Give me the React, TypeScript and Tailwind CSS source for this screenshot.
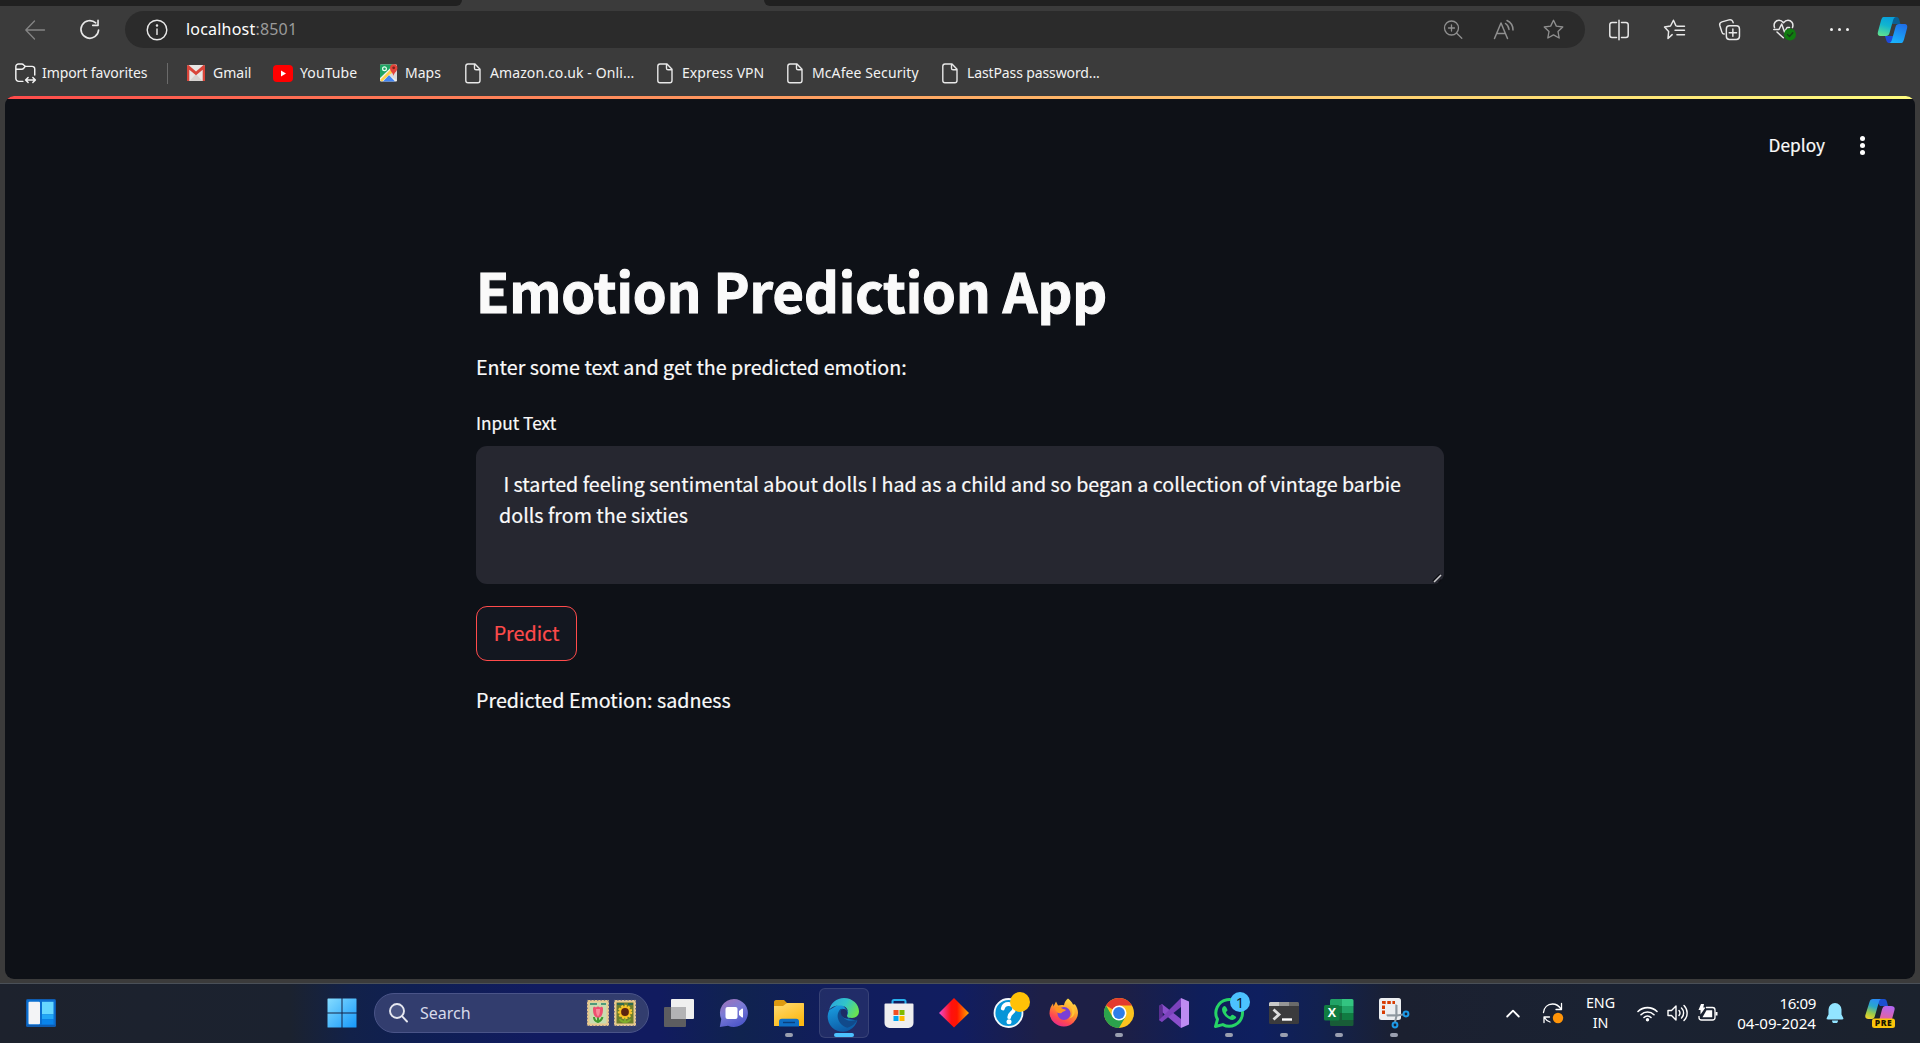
import type { ReactNode } from 'react';

function Icon({ size = 20, className = '', width = 1.3, children }: { size?: number; className?: string; width?: number; children: ReactNode }) {
  return (
    <svg width={size} height={size} viewBox="0 0 20 20" fill="none" stroke="currentColor" strokeWidth={width} strokeLinecap="round" strokeLinejoin="round" className={'shrink-0 overflow-visible ' + className}>
      {children}
    </svg>
  );
}

function AppIcon({ children, className = '' }: { children: ReactNode; className?: string }) {
  return (
    <svg width="30" height="30" viewBox="0 0 30 30" className={'block shrink-0 overflow-visible ' + className}>
      {children}
    </svg>
  );
}

const STAR = 'M10 1.2l2.7 5.6 6.1.8-4.5 4.3 1.1 6.2L10 15.1l-5.4 3 1.1-6.2L1.2 7.600l6.100-.8z';

function TabStrip() {
  return (
    <div className="flex h-[6px] w-full bg-[#3b3b3b]">
      <div className="h-full w-[462px] rounded-br-[6px] bg-[#202020]" />
      <div className="h-full w-[302px]" />
      <div className="h-full flex-1 rounded-bl-[6px] bg-[#202020]" />
    </div>
  );
}

function CopilotLogo() {
  return (
    <svg width="31" height="28" viewBox="0 0 31 28" className="shrink-0">
      <defs>
        <linearGradient id="cpA" x1="0.6" y1="0" x2="0.3" y2="1">
          <stop offset="0" stopColor="#089fdc" />
          <stop offset="0.45" stopColor="#11b5cf" />
          <stop offset="1" stopColor="#5fe08e" />
        </linearGradient>
        <linearGradient id="cpB" x1="0.7" y1="0" x2="0.3" y2="1">
          <stop offset="0" stopColor="#1f6fe8" />
          <stop offset="1" stopColor="#19b4fb" />
        </linearGradient>
      </defs>
      <path d="M8.500 1h11c2 0 2.400 1.500 3 3.500L23.500 8h-8z" fill="#0a5f92" />
      <path d="M22.500 27h-10c-2.600 0-3-2-3.600-4l-1-3h8z" fill="#1f49d8" />
      <path d="M6.500 1H19c-1.600 0-2.400 1.300-3 3.500l-3.500 12.500c-.7 2.300-1.700 3-3.500 3H3.500c-2.500 0-3.200-1.800-2.600-4L4 4.500C4.800 2 5.500 1 6.500 1z" fill="url(#cpA)" />
      <path d="M24.500 27H12c1.600 0 2.400-1.300 3-3.500l3.500-12.500c.7-2.300 1.700-3 3.500-3H27.500c2.500 0 3.200 1.800 2.600 4L27 23.500c-.8 2.500-1.500 3.500-2.500 3.500z" fill="url(#cpB)" />
    </svg>
  );
}

function Toolbar() {
  return (
    <div className="flex h-[47px] items-center text-[#e8e8e8]">
      <Icon className="ml-[25px] text-[#858585]" size={20}>
        <path d="M19.500 10H1M9.500 1L.8 10l8.700 9" />
      </Icon>
      <Icon className="ml-[34px]" size={22} width={1.5}>
        <path d="M17.800 10a8 8 0 1 1-2.600-6.400M17.300 1.300v4.500h-4.800" />
      </Icon>
      <div className="ml-[24px] flex h-[37px] w-[1460px] items-center rounded-full bg-[#2b2b2b]">
        <Icon className="ml-[21px]" size={22} width={1.3}>
          <circle cx="10" cy="10" r="8.900" />
          <path d="M10 9v5" />
          <circle cx="10" cy="6" r=".5" fill="currentColor" />
        </Icon>
        <p className="ml-[18px] pb-px text-[16px] leading-[22px] tracking-[0.200px] text-white">
          localhost<span className="text-[#9a9a9a]">:8501</span>
        </p>
        <div className="mr-[21px] ml-auto flex items-center text-[#8f8f8f]">
          <Icon size={20}>
            <circle cx="8.500" cy="8" r="7" />
            <path d="M13.500 13l5.300 5.200M5.500 8h6M8.500 5v6" />
          </Icon>
          <Icon className="ml-[31px]" size={20} width={1.5}>
            <path d="M.5 18.500L7 3l6.500 15.500M2.800 13.500h8.500M11.500 3.500a8 8 0 0 1 3.500 6M13 .5a10.500 10.500 0 0 1 6 9.500" />
          </Icon>
          <Icon className="ml-[29px]" size={21}>
            <path d={STAR} />
          </Icon>
        </div>
      </div>
      <Icon className="ml-[24px]" size={20} width={1.5}>
        <path d="M7.500 2.500H3A2.200 2.200 0 0 0 .8 4.700v10.600A2.200 2.200 0 0 0 3 17.500h4.500M12.500 2.500H17a2.200 2.200 0 0 1 2.200 2.200v10.600A2.200 2.200 0 0 1 17 17.500h-4.500M10 .3v19.400" />
      </Icon>
      <Icon className="ml-[35px]" size={21} width={1.4}>
        <path d="M7.800 14.900L3.800 18.600l.6-6.700L.5 7.700l5.700-1L9 1.200l2.300 5.100M12.300 6.800h7.200M10.500 10.800h9M12.300 14.900h7.200" />
      </Icon>
      <Icon className="ml-[34px]" size={21} width={1.4}>
        <path d="M7 12.500V9.500A3 3 0 0 1 10 6.500h6.500a3 3 0 0 1 3 3v7a3 3 0 0 1-3 3H10a3 3 0 0 1-3-3zM13.200 9.500v7M9.700 13h7M5 14.300C3.700 14.600 3 13.500 2.600 12L.8 6.200C.3 4.400 1 3.200 2.800 2.700L9.500.8C11.500.2 12.900 1 13.500 3.500" />
      </Icon>
      <svg className="ml-[33px] shrink-0" width="23" height="22" viewBox="0 0 23 22" fill="none" stroke="#e8e8e8" strokeWidth="1.500" strokeLinecap="round" strokeLinejoin="round">
        <path d="M1.500 8.500C0 4 3 1.300 6 1.300c2.300 0 3.600 1.300 4.500 2.400C11.400 2.600 12.700 1.300 15 1.300c3 0 6 2.700 4.500 7.200M0.800 10.500h5.200l2.700-5.500 2.800 8 2.500-4.500h2.500M4 13l6.300 5.800" />
        <circle cx="17" cy="15.500" r="6" fill="#107c10" stroke="none" />
        <path d="M14.500 15.500l2 2 3.300-3.800" stroke="#173d17" strokeWidth="1.300" />
      </svg>
      <div className="ml-[34px] flex gap-[5px]">
        <span className="size-[3px] rounded-full bg-[#f0f0f0]" />
        <span className="size-[3px] rounded-full bg-[#f0f0f0]" />
        <span className="size-[3px] rounded-full bg-[#f0f0f0]" />
      </div>
      <div className="ml-[28px]">
        <CopilotLogo />
      </div>
    </div>
  );
}

function FileIcon() {
  return (
    <svg width="16" height="21" viewBox="0 0 16 21" fill="none" stroke="#e8e8e8" strokeWidth="1.400" strokeLinejoin="round" className="shrink-0">
      <path d="M3 1h7l5 5.300v11.200a2.200 2.200 0 0 1-2.200 2.200H3A2.200 2.200 0 0 1 .8 17.500V3.200A2.200 2.200 0 0 1 3 1zM9.500 1v4.200c0 1 .6 1.600 1.600 1.600H15" />
    </svg>
  );
}

function Bookmark({ icon, label, box, gap = 'gap-[9px]' }: { icon: ReactNode; label: string; box: string; gap?: string }) {
  return (
    <div className={'flex shrink-0 items-center text-[14px] leading-5 whitespace-nowrap text-[#f2f2f2] ' + box + ' ' + gap}>
      {icon}
      <span>{label}</span>
    </div>
  );
}

function BookmarksBar() {
  return (
    <div className="flex h-[43px] items-center pb-[3px] pl-[15px]">
      <Bookmark
        box="w-[152px] tracking-[-0.080px]"
        gap="gap-[6px]"
        label="Import favorites"
        icon={
          <Icon size={21} width={1.4}>
            <path d="M7.500 17.500H3.500A2.700 2.700 0 0 1 .8 14.800V3.500A2.500 2.500 0 0 1 3.300 1h3.200c.8 0 1.300.3 1.800.9L9.800 3.200h6.500A2.500 2.500 0 0 1 18.800 5.700V11.500M.8 5.900h5.500c1 0 1.500-.3 2-.9l1.500-1.800M10.500 16.200h8.500M12.500 13.800l-2.400 2.400 2.400 2.400M17 13.800l2.400 2.400-2.400 2.400" />
          </Icon>
        }
      />
      <div className="h-[21px] w-px bg-[#6a6a6a]" />
      <Bookmark
        box="ml-[19px] w-[86px]"
        label="Gmail"
        gap="gap-[8px]"
        icon={
          <svg width="18" height="16" viewBox="0 0 18 16">
            <rect width="18" height="16" rx="1.500" fill="#e9e6e4" />
            <path d="M2.500 16L9 9l6.500 7z" fill="#d6d2d0" />
            <path d="M0 1.500C0 .5.700 0 1.500 0L9 6.500 16.500 0c.8 0 1.500.5 1.500 1.500V16h-2.300V4.800L9 10.200 2.300 4.800V16H0z" fill="#d9453a" />
          </svg>
        }
      />
      <Bookmark
        box="w-[107px] tracking-[0.100px]"
        gap="gap-[7px]"
        label="YouTube"
        icon={
          <svg width="20" height="17" viewBox="0 0 20 17">
            <rect width="20" height="17" rx="4" fill="#f00" />
            <path d="M8 5.500l5 3-5 3z" fill="#fff" />
          </svg>
        }
      />
      <Bookmark
        box="w-[85px]"
        gap="gap-[7px]"
        label="Maps"
        icon={
          <svg width="18" height="20" viewBox="0 0 18 20">
            <rect y="1.500" width="17" height="17" rx="1" fill="#f2f2f0" />
            <path d="M1 1.500h13L0 15V2.500a1 1 0 0 1 1-1z" fill="#1fa463" />
            <path d="M3 18.500L9 12l6 6.500z" fill="#4285f4" />
            <path d="M16 9l-7 3L2 18.500 0 17 12 5z" fill="#ffd04b" />
            <path d="M9 12l8-5v10.500z" fill="#dcdcdc" />
            <circle cx="4.500" cy="5.800" r="1.900" fill="none" stroke="#e9fff2" strokeWidth="1.200" />
            <path d="M13.500 13c-.6-3.500-3.500-4.500-3.500-8a3.700 3.700 0 0 1 7.400 0c0 3.500-3.300 4.500-3.900 8z" fill="#e5443a" />
            <circle cx="13.700" cy="4.800" r="1.400" fill="#7b231d" />
          </svg>
        }
      />
      <Bookmark box="w-[192px] tracking-[0.100px]" label="Amazon.co.uk - Onli..." icon={<FileIcon />} />
      <Bookmark box="w-[130px] tracking-[0.050px]" label="Express VPN" icon={<FileIcon />} />
      <Bookmark box="w-[155px] tracking-[0.100px]" label="McAfee Security" icon={<FileIcon />} />
      <Bookmark box="w-[190px] tracking-[-0.120px]" label="LastPass password..." icon={<FileIcon />} />
    </div>
  );
}

function Streamlit() {
  return (
    <main className="ml-[5px] flex h-[883px] w-[1910px] flex-col overflow-hidden rounded-[9px] bg-[#0e1117] font-['Noto_Sans_CJK_SC',sans-serif] text-[#fafafa] [-webkit-text-stroke:0.2px]">
      <div className="h-[3px] w-full bg-linear-to-r from-[#ff4b4b] to-[#fffd80]" />
      <header className="flex h-[92px] items-center justify-end pr-[50px]">
        <span className="text-[17.250px] leading-6">Deploy</span>
        <div className="ml-[35px] flex flex-col items-center gap-[2px]">
          <span className="size-[5px] rounded-full bg-white" />
          <span className="size-[5px] rounded-full bg-white" />
          <span className="size-[5px] rounded-full bg-white" />
        </div>
      </header>
      <section className="ml-[471px] flex w-[968px] flex-col items-start">
        <h1 className="mt-[63px] text-[54.100px] leading-[72px] font-bold tracking-[-0.030px] whitespace-nowrap [-webkit-text-stroke:1.1px]">Emotion Prediction App</h1>
        <p className="mt-[23px] text-[19.700px] leading-[36px]">Enter some text and get the predicted emotion:</p>
        <label className="mt-[25px] text-[17.250px] leading-[26px]">Input Text</label>
        <div className="relative mt-[10px] h-[138px] w-full rounded-[11px] bg-[#262730] pt-[22px] pl-[23px]">
          <p className="text-[19.700px] leading-[31px] whitespace-pre">{' I started feeling sentimental about dolls I had as a child and so began a collection of vintage barbie\ndolls from the sixties'}</p>
          <svg className="absolute right-[2px] bottom-[1px]" width="10" height="10" viewBox="0 0 10 10">
            <path d="M1 8.500L8 1.500" stroke="#0c0d12" strokeWidth="2" />
            <path d="M2 9L9 2" stroke="#c9c9cc" strokeWidth="1.600" />
            <path d="M6.500 9.500L9.500 6.500" stroke="#0c0d12" strokeWidth="1.500" />
          </svg>
        </div>
        <button className="mt-[22px] h-[55px] w-[101px] rounded-[11px] border border-[#ff4b4b] bg-[#131720] pb-[2px] text-[19.700px] leading-[31px] text-[#ff4b4b]">Predict</button>
        <p className="mt-[21px] text-[19.700px] leading-[36px]">Predicted Emotion: sadness</p>
      </section>
    </main>
  );
}

function Slot({ children, dot = false }: { children: ReactNode; dot?: boolean }) {
  return (
    <div className="relative flex h-full w-[55px] shrink-0 items-center justify-center">
      {children}
      {dot && <span className="absolute bottom-[5px] h-1 w-2 rounded-full bg-[#9a9fb0]" />}
    </div>
  );
}

function Stamp({ flower }: { flower: 'tulip' | 'sunflower' }) {
  const tulip = flower === 'tulip';
  return (
    <svg width="24" height="28" viewBox="0 0 24 28">
      <rect x="1" y="1" width="22" height="26" fill="#e8c98e" />
      <rect x=".8" y=".8" width="22.400" height="26.400" fill="none" stroke="#3b4576" strokeWidth="1.600" strokeDasharray="1.400 2" />
      <rect x="3.500" y="3.500" width="17" height="21" fill={tulip ? '#c9dcb0' : '#6d7f2c'} />
      <path d="M4 5h7M15 5h5" stroke={tulip ? '#4f9a7a' : '#2f6a52'} strokeWidth="2" />
      {tulip ? (
        <>
          <path d="M12 24V15M12 23c-3-1-4-3-4-5M12 23c3-1 4-3 4.500-5" stroke="#3f9a2f" strokeWidth="2" fill="none" />
          <path d="M7 9.500c0-2 2-2 3-1 1-1.500 3-1.500 4 0 1-1 3-1 3 1 0 6-1.500 9-5 9s-5-3-5-9z" fill="#ef4f70" />
          <path d="M10 10c0 4 .5 6 2 7.500 1.500-1.500 2-3.500 2-7.500z" fill="#f98a9a" />
        </>
      ) : (
        <>
          <path d="M12 24v-6M12 23c-3 0-5-2-5-3M12 23c3 0 5-2 5-3" stroke="#7fae2c" strokeWidth="2" fill="none" />
          <circle cx="12" cy="13" r="6" fill="#f5b915" stroke="#f8c832" strokeWidth="2.500" strokeDasharray="2 1.400" />
          <circle cx="12" cy="13" r="3.900" fill="#5b2410" />
        </>
      )}
    </svg>
  );
}

function Taskbar() {
  return (
    <footer className="flex h-[60px] w-full items-center overflow-hidden border-t border-[#4a5058] bg-[linear-gradient(90deg,#1d222d_0px,#1b222f_290px,#122149_350px,#0f1f52_410px,#111b60_540px,#111b5f_660px,#10234f_740px,#111d5c_830px,#111d60_960px,#1d1f47_1040px,#1d1f45_1120px,#0f1e5a_1200px,#0e1f5f_1260px,#12214f_1320px,#1b2030_1400px,#1a2232_1600px,#1b222d_1920px)] pb-px text-white">
      <svg width="30" height="28" viewBox="0 0 30 28" className="ml-[26px] shrink-0">
        <rect width="30" height="28" rx="1.500" fill="#0f5cb0" />
        <rect x="1" y="1" width="28" height="25" rx="1" fill="#0a6fd0" />
        <rect x="2.500" y="2.800" width="11.500" height="22.500" rx="1" fill="#f3f4f6" />
        <rect x="16" y="2.800" width="11.500" height="12.500" fill="#66d8ff" />
        <rect x="16" y="15.300" width="11.500" height="5" fill="#22a7f6" />
        <rect x="16" y="20.300" width="11.500" height="5" fill="#0a84ea" />
      </svg>
      <AppIcon className="ml-[271px]">
        <defs>
          <linearGradient id="win" x1="0" y1="0" x2="1" y2="1">
            <stop offset="0" stopColor="#85dcff" />
            <stop offset="1" stopColor="#1598fb" />
          </linearGradient>
        </defs>
        <path d="M1 .5h13.500V14.500H.5V1zM15.500.5H29a.5.5 0 0 1 .5.5v13.500h-14zM.5 15.500h14v14H1a.5.5 0 0 1-.5-.5zM15.500 15.500h14V29a.5.5 0 0 1-.5.5H15.500z" fill="url(#win)" />
      </AppIcon>
      <div className="ml-[17px] flex h-10 w-[275px] shrink-0 items-center rounded-full border border-[#4a5488] bg-[#323d6e]">
        <svg width="20" height="20" viewBox="0 0 20 20" className="ml-[14px]" fill="none" stroke="#e6e8f0" strokeWidth="1.900" strokeLinecap="round">
          <circle cx="8" cy="8" r="7" fill="#4a5584" />
          <path d="M13 13.200l5 5.300" />
        </svg>
        <span className="ml-[11px] text-[16px] text-[#d7daea]">Search</span>
        <div className="mr-[11px] ml-auto flex gap-[3px]">
          <Stamp flower="tulip" />
          <Stamp flower="sunflower" />
        </div>
      </div>
      <div className="ml-[2px] flex h-full shrink-0">
        <Slot>
          <AppIcon>
            <rect x="0" y="9" width="22" height="20" rx="1" fill="#5d5d60" />
            <rect x="7" y="1" width="23" height="20" rx="1" fill="#efefef" />
            <rect x="7" y="9" width="15" height="12" fill="#b3b3b5" />
          </AppIcon>
        </Slot>
        <Slot>
          <AppIcon>
            <defs>
              <linearGradient id="chat" x1="0" y1="0" x2="0.500" y2="1">
                <stop offset="0" stopColor="#a472b5" />
                <stop offset="0.500" stopColor="#7b7bd6" />
                <stop offset="1" stopColor="#5059c9" />
              </linearGradient>
            </defs>
            <path d="M15 1a14 14 0 1 1-6 26.700L.8 29l1.500-8A14 14 0 0 1 15 1z" fill="url(#chat)" />
            <rect x="6.500" y="9" width="12" height="12" rx="2" fill="#fff" />
            <path d="M20 13l3-2.500c.5-.3 1 0 1 .5v8c0 .5-.5.800-1 .5L20 17z" fill="#fff" />
          </AppIcon>
        </Slot>
        <Slot dot>
          <AppIcon>
            <defs>
              <linearGradient id="folder" x1="0" y1="0" x2="0.600" y2="1">
                <stop offset="0" stopColor="#ffdb73" />
                <stop offset="1" stopColor="#fdb913" />
              </linearGradient>
            </defs>
            <path d="M0 4c0-1 .6-2 2-2h8l3.500 3.500L10 9H0z" fill="#dd9a10" />
            <path d="M13 5h16.500l.5.500V28H0V8h9z" fill="url(#folder)" />
            <path d="M5 28.500v-5a2.800 2.800 0 0 1 2.800-2.800h14.400A2.800 2.800 0 0 1 25 23.500v5z" fill="#0f6fc6" />
            <path d="M9 24.500h12" stroke="#0a3f7c" strokeWidth="1.400" />
          </AppIcon>
        </Slot>
        <div className="relative flex h-full w-[55px] shrink-0 items-center justify-center">
          <div className="flex size-[50px] items-center justify-center rounded-md border border-white/10 bg-white/7">
            <AppIcon>
              <defs>
                <linearGradient id="edgeTop" x1="0" y1="0.200" x2="1" y2="0.600">
                  <stop offset="0" stopColor="#2aa5de" />
                  <stop offset="0.500" stopColor="#32c5c9" />
                  <stop offset="1" stopColor="#6be34f" />
                </linearGradient>
                <linearGradient id="edgeLow" x1="0.300" y1="0" x2="0.600" y2="1">
                  <stop offset="0" stopColor="#1aa0e2" />
                  <stop offset="1" stopColor="#0c59a4" />
                </linearGradient>
              </defs>
              <path d="M28.200 22.500A15 15 0 1 1 .3 12L12 5l10 12-2 4z" fill="url(#edgeLow)" />
              <path d="M.3 12C1.500 5 7.500 0 15 0c8.500 0 15 6.500 15 13.200 0 4.300-3.200 6.800-7 6.800-2.800 0-5-1-5-2 0-.8 1-1.500 1-3.700C19 10 15.500 7.500 11 7.500 5.500 7.500 1.800 9.500.3 12z" fill="url(#edgeTop)" />
              <path d="M11.500 11c-2.500 2.500-3.500 6-2.500 9.500 1.200 4.500 5 8.300 9.500 9.200 4.200-1 7.700-4 9.700-7.200.4-.8-.2-1.200-1-.8-4.200 2-9.700 1.300-12.700-2-2.200-2.500-3-6-.5-9z" fill="#114a8b" />
              <path d="M12 12.500c2-2.500 6-1.500 6.500 1.500.2 1.700-.5 2.800-.5 4 0 1 1 2 2.500 2.500-3 .5-6-.3-7.500-2.500-1.200-1.700-1.700-3.700-1-5.500z" fill="#1c2c66" />
            </AppIcon>
          </div>
          <span className="absolute bottom-[5px] h-1 w-5 rounded-full bg-[#4cc2ff]" />
        </div>
        <Slot>
          <AppIcon>
            <path d="M8.500 7V3.500C8.500 2.500 9 2 10 2h10c1 0 1.500.5 1.500 1.500V7" fill="none" stroke="#27b0ee" strokeWidth="2" />
            <path d="M1.500 5.500h27a1 1 0 0 1 1 1V25a5 5 0 0 1-5 5h-19a5 5 0 0 1-5-5V6.500a1 1 0 0 1 1-1z" fill="#eeeeef" />
            <rect x="9.500" y="12" width="5" height="5" fill="#f25022" />
            <rect x="15.500" y="12" width="5" height="5" fill="#7fba00" />
            <rect x="9.500" y="18" width="5" height="5" fill="#00a4ef" />
            <rect x="15.500" y="18" width="5" height="5" fill="#ffb900" />
          </AppIcon>
        </Slot>
        <Slot>
          <AppIcon>
            <defs>
              <linearGradient id="dia">
                <stop offset="0" stopColor="#f04bd0" />
                <stop offset="0.400" stopColor="#ff1010" />
                <stop offset="0.600" stopColor="#ff1500" />
                <stop offset="1" stopColor="#ffa800" />
              </linearGradient>
            </defs>
            <path d="M15 0l15 15-15 14.500L0 15z" fill="url(#dia)" />
          </AppIcon>
        </Slot>
        <Slot>
          <AppIcon>
            <circle cx="14.500" cy="15" r="14" fill="#0795d8" stroke="#f4f8fb" strokeWidth="1.800" />
            <path d="M8.800 10.500c.8-3.500 3.200-4.500 5.700-4.500 3.500 0 5.700 2 5.700 4.700 0 4-5 4.200-5 8.500" fill="none" stroke="#fff" strokeWidth="3.800" strokeLinecap="round" />
            <circle cx="15" cy="23.800" r="2.500" fill="#fff" />
            <circle cx="26" cy="4" r="10" fill="#ffc107" />
          </AppIcon>
        </Slot>
        <Slot>
          <AppIcon>
            <defs>
              <linearGradient id="ffx" x1="0.800" y1="0" x2="0.300" y2="1">
                <stop offset="0" stopColor="#ffe84a" />
                <stop offset="0.450" stopColor="#ff9a2a" />
                <stop offset="0.750" stopColor="#ff4a4f" />
                <stop offset="1" stopColor="#e5298c" />
              </linearGradient>
            </defs>
            <path d="M19 .5c2 1.500 4 3.500 5 6 1 .2 1.500 0 1.700-.5C28 9 29 12 29 15a14.300 14.300 0 0 1-28.500.500C.5 11 2 8 4 5.500l.5 3L7 3.500l2 4c2-.7 4-.8 6-.3.5-3 2-5.500 4-6.700z" fill="url(#ffx)" />
            <circle cx="15" cy="15.500" r="6.500" fill="#7a3fd6" />
            <path d="M6 10c3-1.500 5-1 7 .5 1.500 1 3 .5 4 1.500-1.500 1.500-3.500 1.500-4.500 3-3 1-6-1-6.500-5z" fill="#ff9620" />
            <path d="M22 9c2 4 2 9-2 11.500 5-1 7-6 5-10.500z" fill="#ffc533" />
          </AppIcon>
        </Slot>
        <Slot dot>
          <AppIcon>
            <circle cx="15" cy="15" r="15" fill="#fcc31e" />
            <path d="M15 15L2 7.500A15 15 0 0 1 28 7.500H15z" fill="#e33b2e" />
            <path d="M2 7.500A15 15 0 0 0 15 30l6.500-11.200L15 15l-6.500 3.800z" fill="#2ba24c" />
            <circle cx="15" cy="15" r="7.500" fill="#fff" />
            <circle cx="15" cy="15" r="5.900" fill="#2f7de9" />
          </AppIcon>
        </Slot>
        <Slot>
          <AppIcon>
            <path d="M0 8l3-2 19 15v9L3.500 14.500 0 8z" fill="#8a4fcb" />
            <path d="M0 8l3-2 .8 3v12.500l-.8 2.500-3-2z" fill="#5a2e91" />
            <path d="M3 24l-3-2 22-22v9z" fill="#7c42bd" />
            <path d="M22 0l8 3.500v23L22 30z" fill="#bd8bf2" />
          </AppIcon>
        </Slot>
        <Slot dot>
          <AppIcon>
            <path d="M1.500 28.500l2-7.200A13.300 13.300 0 1 1 8.800 26.600z" fill="none" stroke="#26d366" strokeWidth="3" strokeLinejoin="round" />
            <path d="M10.500 8c-.8 0-2.500 1.300-2.500 3.500 0 4.500 6 10.500 10.500 10.500 2.200 0 3.700-1.800 3.700-2.900 0-.6-3.200-2.400-3.900-2.400-.8 0-1.500 1.700-2.300 1.700-1 0-4-3-4-4 0-.8 1.500-1.300 1.500-2.100 0-.9-1.800-4.300-3-4.300z" fill="#26d366" />
          </AppIcon>
          <span className="absolute top-[8px] left-[29px] flex size-5 items-center justify-center rounded-full bg-[#4cc2ff] text-[15px] leading-none text-[#10202c]">1</span>
        </Slot>
        <Slot dot>
          <AppIcon>
            <rect x="0" y="4" width="30" height="22" rx="1.500" fill="#3b3b3d" />
            <path d="M0 8V5.500A1.500 1.500 0 0 1 1.500 4H10v4z" fill="#c9c9c9" />
            <path d="M10 4h10v4H10z" fill="#969696" />
            <path d="M20 4h8.500A1.500 1.500 0 0 1 30 5.500V8H20z" fill="#6a6a6a" />
            <path d="M4.500 11.500l5.500 5-5.500 5" fill="none" stroke="#dcdcdc" strokeWidth="2.800" />
            <path d="M13 21.500h10" stroke="#fff" strokeWidth="2.400" />
          </AppIcon>
        </Slot>
        <Slot dot>
          <AppIcon>
            <path d="M6 2.500A1.500 1.500 0 0 1 7.500 1H18v7H6z" fill="#21a366" />
            <path d="M18 1h10a1.500 1.500 0 0 1 1.500 1.500V8H18z" fill="#33c481" />
            <path d="M6 8h12v7H6z" fill="#107c41" />
            <path d="M18 8h11.500v7H18z" fill="#21a366" />
            <path d="M6 15h12v13H7.500A1.500 1.500 0 0 1 6 26.500z" fill="#185c37" />
            <path d="M18 15h11.500v7H18z" fill="#107c41" />
            <path d="M18 22h11.500v4.500A1.500 1.500 0 0 1 28 28H18z" fill="#185c37" />
            <rect x="0" y="7" width="15.500" height="15.500" rx="1.500" fill="#107c41" />
            <text x="7.800" y="19" textAnchor="middle" fontSize="12.500" fontWeight="700" fill="#fff" className="font-['Open_Sans',sans-serif]">X</text>
          </AppIcon>
        </Slot>
        <Slot dot>
          <AppIcon>
            <rect x="0" y="0" width="22" height="22" rx="2.500" fill="#eceef1" />
            <path d="M7 17h10V6" fill="none" stroke="#c7ccd2" strokeWidth="2" />
            <path d="M4.500 16v-11.500h11.500" fill="none" stroke="#d83b01" strokeWidth="3" strokeDasharray="3.500 1.600" />
            <path d="M17.500 7v11l-1.500 6M8 17.500h10l6-1" fill="none" stroke="#8e979f" strokeWidth="2" />
            <circle cx="16" cy="27" r="2.400" fill="none" stroke="#1c9ae8" strokeWidth="2" />
            <circle cx="27" cy="16" r="2.400" fill="none" stroke="#1c9ae8" strokeWidth="2" />
          </AppIcon>
        </Slot>
      </div>
      <div className="ml-auto flex h-full shrink-0 items-center pr-[25px]">
        <svg width="14" height="9" viewBox="0 0 14 9" fill="none" stroke="#fff" strokeWidth="1.800" strokeLinecap="round" strokeLinejoin="round">
          <path d="M1.200 7.500L7 1.700l5.800 5.800" />
        </svg>
        <svg className="ml-[22px]" width="22" height="22" viewBox="0 0 22 22" fill="none" stroke="#fff" strokeWidth="1.300" strokeLinecap="round" strokeLinejoin="round">
          <path d="M1.500 10.500C2 5.500 5.500 2 10.500 2c4 0 6.500 1.800 8.500 5M19.500 1.500v6h-5.500M8 20c-3-1-4.500-2.500-6-5M2 20.500V15h5.500" />
          <circle cx="16" cy="16" r="5.200" fill="#ff9408" stroke="none" />
        </svg>
        <div className="ml-[21px] w-[31px] text-center text-[14.300px] leading-5">
          ENG
          <br />
          IN
        </div>
        <svg className="ml-[21px]" width="21" height="17" viewBox="0 0 21 17" fill="none" stroke="#fff" strokeWidth="1.600" strokeLinecap="round">
          <path d="M1 6.500a13.500 13.500 0 0 1 19 0M4 9.700a9.200 9.200 0 0 1 13 0M7 12.500a5 5 0 0 1 7 0" />
          <circle cx="10.500" cy="14.700" r="1.700" fill="#fff" stroke="none" />
        </svg>
        <svg className="ml-[9px]" width="21" height="18" viewBox="0 0 21 18" fill="none" stroke="#fff" strokeWidth="1.400" strokeLinecap="round" strokeLinejoin="round">
          <path d="M1 6.500h3.500L9 2v14l-4.500-4.500H1zM12 6.500a4 4 0 0 1 0 5M14.500 4a7 7 0 0 1 0 10M17 1.500a10.500 10.500 0 0 1 0 15" />
        </svg>
        <svg className="ml-[9px]" width="21" height="18" viewBox="0 0 21 18" fill="none" stroke="#fff" strokeWidth="1.300" strokeLinejoin="round">
          <path d="M9 3.500h6.500A2.500 2.500 0 0 1 18 6v7.500a2.500 2.500 0 0 1-2.500 2.500h-11A2.500 2.500 0 0 1 2 13.500V12" />
          <path d="M9.500 6.300h5.700v6.900H5.500z" fill="#fff" stroke="none" />
          <path d="M19.500 8v3.500" strokeWidth="2" />
          <path d="M4 0h3L6.300 3.500H8.500L3.500 10.500V6H1.500z" fill="#fff" stroke="none" />
        </svg>
        <div className="ml-[15px] w-[83px] text-right text-[15.100px] leading-5">
          <div className="tracking-[-0.400px]">16:09</div>
          <div>04-09-2024</div>
        </div>
        <svg className="ml-[10px]" width="18" height="20" viewBox="0 0 18 20" fill="#92e4ff">
          <path d="M9 0a6.500 6.500 0 0 1 6.500 6.500v5l1.800 3.500c.3.800 0 1.500-1 1.500H1.700c-1 0-1.300-.7-1-1.500l1.800-3.500v-5A6.500 6.500 0 0 1 9 0zM6 17.500h6a3 3 0 0 1-6 0z" />
        </svg>
        <svg className="ml-[21px]" width="30" height="30" viewBox="0 0 30 30">
          <defs>
            <linearGradient id="preA" x1="0.500" y1="0" x2="0.200" y2="1">
              <stop offset="0" stopColor="#2a8df5" />
              <stop offset="0.350" stopColor="#2aa7c9" />
              <stop offset="0.700" stopColor="#9fcc45" />
              <stop offset="1" stopColor="#f3d22b" />
            </linearGradient>
            <linearGradient id="preB" x1="0.600" y1="0" x2="0.400" y2="1">
              <stop offset="0" stopColor="#b266f2" />
              <stop offset="1" stopColor="#f7627f" />
            </linearGradient>
          </defs>
          <path d="M10 1h9c2 0 2.400 1 3 3l1 4h-8z" fill="#1a4fd0" />
          <path d="M8 1h8.500c-1.500 0-2 1-2.600 3l-4 14c-.5 2-1.400 3-3 3H3.500C1 21-.2 19.500.4 17L4.500 4C5.300 1.700 6 1 8 1z" fill="url(#preA)" />
          <path d="M24 26H12l2-3 3-11.500c.8-2.500 1.800-3.500 3.500-3.500H26c3 0 4.200 1.500 3.500 4L26.500 23c-.6 2-1.200 3-2.500 3z" fill="url(#preB)" />
          <rect x="7" y="20.500" width="23" height="9.500" rx="2.500" fill="#fbc50b" />
          <text x="18.500" y="28.300" textAnchor="middle" fontSize="8.500" fontWeight="800" letterSpacing="0.500" fill="#1a1600" className="font-['Open_Sans',sans-serif]">PRE</text>
        </svg>
      </div>
    </footer>
  );
}

export default function App() {
  return (
    <div className="flex h-[1043px] w-[1920px] flex-col overflow-hidden bg-[#3b3b3b] font-['Noto_Sans','Open_Sans',sans-serif]">
      <TabStrip />
      <Toolbar />
      <BookmarksBar />
      <Streamlit />
      <div className="h-[4px] shrink-0" />
      <Taskbar />
    </div>
  );
}
